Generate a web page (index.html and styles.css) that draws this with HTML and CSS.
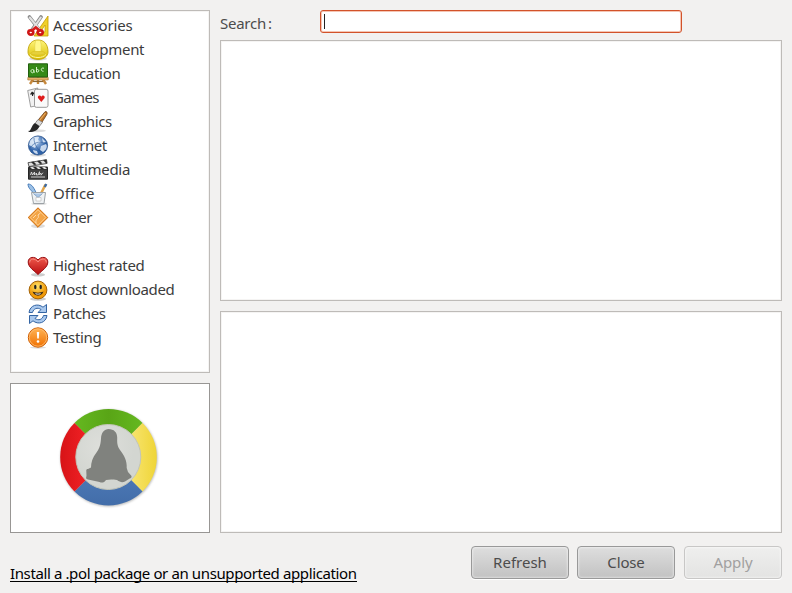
FILE: index.html
```
<!DOCTYPE html>
<html lang="en">
<head>
<meta charset="utf-8">
<title>Install</title>
<link rel="stylesheet" href="styles.css">
</head>
<body>
<svg class="defs" aria-hidden="true">
<defs>
<linearGradient id="yellow" x2="0" y2="1"><stop stop-color="#fff67c"/><stop offset="1" stop-color="#d9bd00"/></linearGradient>
<linearGradient id="orange" x2="0" y2="1"><stop stop-color="#ffb455"/><stop offset="1" stop-color="#f07000"/></linearGradient>
<linearGradient id="red" x2="0" y2="1"><stop stop-color="#ef5a4c"/><stop offset="1" stop-color="#b80d10"/></linearGradient>
<radialGradient id="smile" cx=".45" cy=".3"><stop stop-color="#ffe36b"/><stop offset="1" stop-color="#f09a08"/></radialGradient>
<radialGradient id="globe" cx=".4" cy=".3"><stop stop-color="#b7d2f2"/><stop offset="1" stop-color="#2f62a8"/></radialGradient>
</defs>
</svg>
<main class="window">
<aside class="sidebar">
<ul class="categories">
<li><svg viewBox="0 0 22 22"><path d="M21 1v20H7z" fill="#f0d02c" stroke="#c49a00" stroke-width=".8"/><path d="M18 10v7h-4.500z" fill="#fff" stroke="#c49a00" stroke-width=".7"/><path d="M2.500 2 12.500 15M14 2 5 15" stroke="#888" stroke-width="3.600" stroke-linecap="round"/><path d="M2.800 2.500 12.500 14.500M13.800 2.500 5.500 14.500" stroke="#e2e2e2" stroke-width="2.100" stroke-linecap="round"/><ellipse cx="3.800" cy="17.500" rx="2.500" ry="2.100" fill="#fff" stroke="#cf1717" stroke-width="2.600"/><ellipse cx="13.200" cy="17.500" rx="2.500" ry="2.100" fill="#fff" stroke="#cf1717" stroke-width="2.600"/><path d="m5 15.500 3.800-3 3.800 3" stroke="#d51d1d" stroke-width="2.800" fill="none"/></svg><span class="t1">Accessories</span></li>
<li><svg viewBox="0 0 22 22"><ellipse cx="11" cy="19.700" rx="9" ry="2" fill="#0002"/><path d="M1 13C1 5 5 1 11 1s10 4 10 12c0 4-4 7.500-10 7.500S1 17 1 13z" fill="url(#yellow)" stroke="#c3a50c" stroke-width=".9"/><path d="M3.500 14.500c1-2 4-2.500 7.500-2.500s6.500.5 7.500 2.500c-3 2-12 2-15 0z" fill="#e6d03a" stroke="#d2b81c" stroke-width=".5"/><path d="M8 12C7.500 6 8 3 9 1.500h4c1 1.500 1.500 4.500 1 10.500" fill="#fff88b" stroke="#dcc840" stroke-width=".5"/><path d="M3 15.500c3 4 13 4 16 0" fill="none" stroke="#fff79a"/></svg><span class="t2">Development</span></li>
<li><svg viewBox="0 0 22 22"><path d="m7 15-4 6M15 15l4 6M11 14v7" stroke="#c6883c" stroke-width="2.400"/><path d="M6 18.500h10" stroke="#8b6630" stroke-width="1.200"/><path d="M.8 14.500h20.400v2.500H.8z" fill="#e5b26a" stroke="#a96e2a" stroke-width=".6"/><path d="M1.500.8h19v13.200h-19z" fill="#358a18" stroke="#225e10"/><path d="M6.500 6.800c-3-1.500-3.500 3.200-.8 3 1.300-.1 1-2 1-3l.6 3M9.500 4v5c3 .8 3-3.500 0-2.300M17 5.300c-3-1.400-4 3-.5 3" fill="none" stroke="#d9f5cc" stroke-width="1"/></svg><span class="t3">Education</span></li>
<li><svg viewBox="0 0 22 22"><path d="m.7 3.500 10-2.500 2 17-9 2z" fill="#f1f1f1" stroke="#888" stroke-width=".8"/><path d="m5 4.500-2 2.800c.8.8 1.600.4 2 0v1.700h1.200L6 7.200c1 .7 2-.4 1.300-1.100z" fill="#222"/><rect x="7.500" y="2.300" width="13.500" height="18" rx="1.800" fill="#fafafa" stroke="#8e8e8e" stroke-width=".9"/><path d="M14.300 15 11 11c-.8-2.500 2.300-3.300 3.300-1.200 1-2.100 4.100-1.300 3.300 1.200z" fill="#df1c1c"/></svg><span class="t4">Games</span></li>
<li><svg viewBox="0 0 22 22"><ellipse cx="10" cy="19.800" rx="9" ry="1.500" fill="#0002"/><path d="M18 .7c2-.5 2.800 1 1.700 3L13.500 13.500 9.500 11z" fill="#bd7326" stroke="#69401a" stroke-width=".8"/><path d="m11 8.500 4.500 2.800-3 4L8 12.500z" fill="#d8d8d8" stroke="#777" stroke-width=".7"/><path d="m8 12 4.500 3.200C10.500 19.800 6 21.500 1 21c3.500-1.200 3-6.500 7-9z" fill="#262626"/><path d="m18.500 2-6 7.500" stroke="#e8ac5c" stroke-width="1.200"/></svg><span class="t5">Graphics</span></li>
<li><svg viewBox="0 0 22 22"><ellipse cx="11" cy="20" rx="8" ry="1.600" fill="#0002"/><circle cx="11" cy="10.500" r="9.600" fill="url(#globe)" stroke="#285189" stroke-width=".8"/><path d="M3 6c2-4 7-5 9-4l-1 3 3 2-4 2-2 4-4-2-2-1zM14 11l5-2c2 3 0 6-3 8l-3-2zM6 15l4 1 1 3c-3 0-5-2-5-4zM15 3l4 4-3 1z" fill="#eef5fd" opacity=".8"/><path d="M3 13c5-7 11-7 17-4M7 3c0 7 4 12 9 15" fill="none" stroke="#2d5c9b" stroke-width=".6"/></svg><span class="t6">Internet</span></li>
<li><svg viewBox="0 0 22 22"><path d="M1.500 8.500h19v11.700h-19z" fill="#414141" stroke="#252525"/><path d="m1 3.700 18.500-3 .6 3.700L2 7.600z" fill="#ddd" stroke="#333" stroke-width=".8"/><path d="m4 3 3 3 2.500-.4-3-3zm6-1 3 3 2.500-.4-3-3zm6-1 3 3.300 1-.2-.5-3.500zM1.500 7.500h19v3h-19z" fill="#2b2b2b"/><path d="m3 8 2 2h3L6 8zm6 0 2 2h3l-2-2zm6 0 2 2h3l-2-2z" fill="#ddd"/><path d="m3.500 16 1-3 1 3 2-3v3l2-2v2l2-.3 1-3-.5 3 2-1.500v2l2-2.500M4 18h14" fill="none" stroke="#eee" stroke-width=".8"/></svg><span class="t7">Multimedia</span></li>
<li><svg viewBox="0 0 22 22"><ellipse cx="12" cy="20.800" rx="8" ry="1.200" fill="#0002"/><path d="m18.500 1.500-5 10" stroke="#e0a44a" stroke-width="2.500"/><path d="m19.300 1-1.500 3" stroke="#3c6ba4" stroke-width="2.300"/><path d="M1 1c4 0 6 4 9 10.500H7C5 7 1 6 1 1z" fill="#9dc1e6" stroke="#4076b5" stroke-width=".9"/><path d="M4.500 9.500h14L17 20.500H6.500z" fill="#edf1f3" fill-opacity=".9" stroke="#9ca2a6"/><path d="m6.500 10.500 4.500 4 4.500-4" fill="#adc8e6" stroke="#7397be" stroke-width=".8"/><path d="M9 14.500h5V18H9z" fill="#fff" stroke="#aaa" stroke-width=".5"/></svg><span class="t8">Office</span></li>
<li><svg viewBox="0 0 22 22"><ellipse cx="11" cy="19" rx="7" ry="2" fill="#0002"/><path d="M11 .8 20.800 10.500 11 20.300 1.200 10.500z" fill="#f3a548" stroke="#cf6b09"/><path d="m11 2.800 7.700 7.700L11 18.200 3.300 10.500z" fill="none" stroke="#ffd092" stroke-width=".8"/><path d="M9 16c-1-5 4-4 2-8l2.500-2M6 11l3-3" fill="none" stroke="#ffdfb4" stroke-width=".9"/></svg><span class="t9">Other</span></li>
<li class="spacer"></li>
<li><svg viewBox="0 0 22 22"><ellipse cx="11" cy="19.700" rx="7" ry="1.800" fill="#0003"/><path d="M11 19.500C7 15.500 1.200 12.300 1.200 7 1.200 1.500 8 1 11 5c3-4 9.800-3.500 9.800 2 0 5.300-5.800 8.500-9.800 12.500z" fill="url(#red)" stroke="#960b0e"/><path d="M2.700 7.500C2.700 3 8 3 11 7c3-4 8.300-4 8.300.5" fill="none" stroke="#f7938a" stroke-width=".9"/></svg><span class="t10">Highest rated</span></li>
<li><svg viewBox="0 0 22 22"><ellipse cx="11" cy="19.900" rx="8" ry="1.800" fill="#0003"/><circle cx="11" cy="11" r="8.900" fill="url(#smile)" stroke="#a56305"/><ellipse cx="8.300" cy="8" rx="1.200" ry="2.300" fill="#222"/><ellipse cx="13.700" cy="8" rx="1.200" ry="2.300" fill="#222"/><path d="M5.500 12.500c1.500 5.500 9.500 5.500 11 0-3 1.500-8 1.500-11 0z" fill="#3c2b15"/><path d="M8 14.200c2 .6 4 .6 6 0l-.8 1c-1.500.5-3 .5-4.400 0z" fill="#fff"/></svg><span class="t11">Most downloaded</span></li>
<li><svg viewBox="0 0 22 22"><path d="M2 9.500C3 2 11 0 16 4.200L19.500 1.500v8H11l3-3C10.500 4 6.500 5.500 5.500 9.500z" fill="#a9c8ed" stroke="#3465a4"/><path d="M20 12.500c-1 7.500-9 9.500-14 5.300L2.500 20.500v-8H11l-3 3c3.500 2.500 7.500 1 8.500-3z" fill="#a9c8ed" stroke="#3465a4"/></svg><span class="t12">Patches</span></li>
<li><svg viewBox="0 0 22 22"><ellipse cx="11" cy="20.500" rx="8" ry="1.200" fill="#0002"/><circle cx="11" cy="10.500" r="9.700" fill="url(#orange)" stroke="#cf5d00"/><circle cx="11" cy="10.500" r="8.700" fill="none" stroke="#ffc077" stroke-width=".8"/><path d="M9.800 5h2.400l-.4 6.500h-1.600z" fill="#fff"/><circle cx="11" cy="14.500" r="1.300" fill="#fff"/></svg><span class="t13">Testing</span></li>
</ul>
<div class="preview">
<svg viewBox="0 0 116 115" class="logo">
<defs>
<radialGradient id="disc" cx=".4" cy=".35"><stop stop-color="#dedfdb"/><stop offset="1" stop-color="#d3d6d1"/></radialGradient>
<linearGradient id="green" x2="1"><stop stop-color="#65b820"/><stop offset=".5" stop-color="#59a516"/><stop offset="1" stop-color="#65b820"/></linearGradient>
<linearGradient id="blue" x2="0" y2="1"><stop stop-color="#527fbc"/><stop offset="1" stop-color="#426da9"/></linearGradient>
<linearGradient id="crimson" x2="1"><stop stop-color="#d71317"/><stop offset=".5" stop-color="#ee2024"/><stop offset="1" stop-color="#dc1c1e"/></linearGradient>
<linearGradient id="gold" x2="1"><stop stop-color="#f4df67"/><stop offset=".5" stop-color="#f7e36b"/><stop offset="1" stop-color="#efd537"/></linearGradient>
<filter id="soft" x="-20%" y="-20%" width="140%" height="140%"><feGaussianBlur stdDeviation="1.300"/></filter>
</defs>
<circle cx="59" cy="58" r="48.500" fill="#777" opacity=".5" filter="url(#soft)"/>
<path d="M58.500 57.200 24.500 22.900A48.300 48.300 0 0 1 92.500 22.900z" fill="url(#green)"/>
<path d="M58.500 57.200 92.500 22.900A48.300 48.300 0 0 1 92.500 91.500z" fill="url(#gold)"/>
<path d="M58.500 57.200 92.500 91.500A48.300 48.300 0 0 1 24.500 91.500z" fill="url(#blue)"/>
<path d="M58.500 57.200 24.500 91.500A48.300 48.300 0 0 1 24.500 22.900z" fill="url(#crimson)"/>
<circle cx="58.300" cy="57" r="32.500" fill="url(#disc)" stroke="#c3c5b8" stroke-width="1"/>
<path d="M58.500 29c5.500 0 8.700 3.500 8.700 8.500 0 4-.5 8 2.800 12.500 4 5 7.300 11 6.700 18l1.300 4 3.500 4c.3 1.500-.5 2.300-1.800 2.500L75 81.500c-3 1.500-5 .5-8-1.500-5-.8-7-.8-11 0-2 2.800-4 3-6.500 2L38 79.500c-2-.3-2.300-1.500-1.500-3.500l-.2-5c-.2-1.500.5-2 1.700-2l3-1.500c0-5 1.500-10 5.500-15 3.500-5 4.200-9 4.500-14 .3-6 3.500-9.500 7.500-9.500z" fill="#80827e"/>
</svg>
</div>
</aside>
<section class="content">
<label class="search"><span class="caption">Search<span class="colon">:</span></span><span class="entry"><i class="caret"></i></span></label>
<div class="panel results"></div>
<div class="panel details"></div>
</section>
<footer class="footer">
<a class="link"><span>Install a .pol package or an unsupported application</span></a>
<div class="buttons"><button class="b1"><span>Refresh</span></button><button class="b2"><span>Close</span></button><button class="b3" disabled><span>Apply</span></button></div>
</footer>
</main>
</body>
</html>
```
FILE: styles.css
```
* { box-sizing: border-box; }
body { margin: 0; background: #f2f1f0; color: #3c3c3c; font: 15px "Noto Sans", "Open Sans", sans-serif; }
.defs { display: block; width: 0; height: 0; }
.window { width: 792px; height: 593px; padding: 10px 10px 0; display: grid; grid-template-columns: 200px 562px; grid-template-rows: 523px 60px; column-gap: 10px; overflow: hidden; }
.sidebar { display: flex; flex-direction: column; gap: 10px; }
.categories { margin: 0; padding: 3px 0 0 16px; height: 363px; list-style: none; background: #fff; border: 1px solid #bebbb8; box-shadow: inset 0 0 0 1px #f5f4f3; }
.categories li { height: 24px; display: flex; align-items: center; gap: 4px; line-height: 22px; white-space: nowrap; }
.categories li span { height: 24px; }
.categories svg { width: 22px; height: 22px; flex: none; }
.t1 { letter-spacing: -.2px; }
.t2, .t3, .t7 { letter-spacing: -.3px; }
.t4 { letter-spacing: -.65px; }
.t5, .t9 { letter-spacing: -.4px; }
.t6 { letter-spacing: -.5px; }
.t10, .t11, .t12, .t13 { letter-spacing: -.34px; }
.preview { height: 150px; padding: 16px 0 0 39px; background: #fff; border: 1px solid #989694; }
.logo { display: block; width: 116px; height: 115px; }
.content { display: flex; flex-direction: column; }
.search { display: flex; height: 23px; margin-bottom: 7px; }
.caption { width: 100px; line-height: 27px; color: #4c4c4c; letter-spacing: -.25px; }
.colon { margin-left: 2px; }
.entry { width: 362px; height: 23px; padding: 3px 0 0 3px; background: #fff; border: 1px solid #d2522a; border-radius: 3px; box-shadow: inset 0 0 0 1px #f5c5b3; }
.caret { display: block; width: 1px; height: 15px; background: #222; }
.panel { background: #fff; border: 1px solid #bebbb8; box-shadow: inset 0 0 0 1px #f5f4f3; }
.results { height: 261px; margin-bottom: 10px; }
.details { height: 222px; }
.footer { grid-column: 1 / -1; display: flex; justify-content: space-between; align-items: flex-start; padding-top: 13px; }
.link { margin-top: 17px; height: 19px; line-height: 20px; color: #000; border-bottom: 1px solid #000; white-space: nowrap; letter-spacing: -.385px; }
.buttons { display: flex; gap: 8px; }
button { width: 98px; height: 33px; padding: 0 0 2px; font: inherit; color: #4c4c4c; border: 1px solid #999; border-radius: 4px; background: linear-gradient(#dedede, #c2c2c2); box-shadow: inset 0 0 2px 1px #ffffff70, 0 1px 0 #fff; }
.b2, .b3 { letter-spacing: -.15px; }
.b3 { margin-left: 1px; color: #a1a09f; border-color: #c8c7c6; background: linear-gradient(#efefee, #e3e3e2); }
```
